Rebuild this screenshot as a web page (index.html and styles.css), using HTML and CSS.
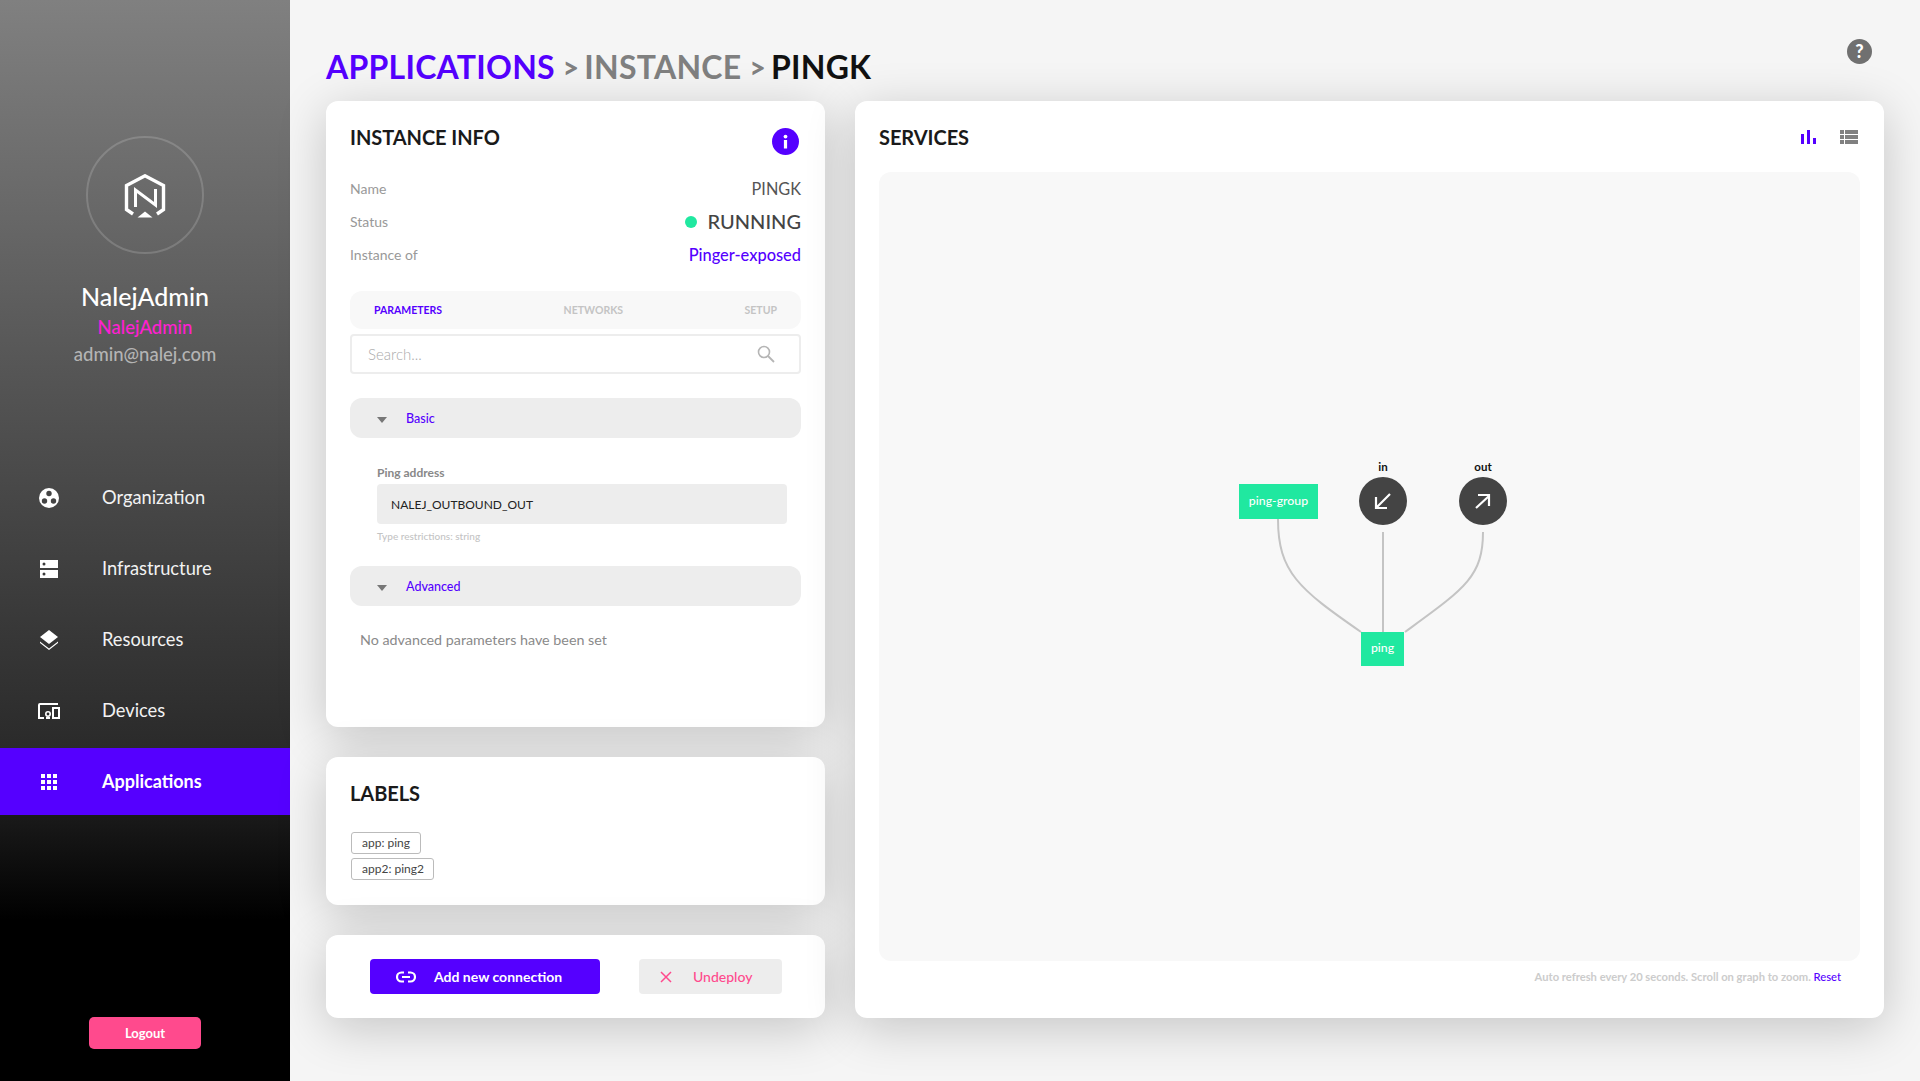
FILE: index.html
```html
<!DOCTYPE html>
<html lang="en">
<head>
<meta charset="utf-8">
<title>Nalej - Instance</title>
<link rel="stylesheet" href="styles.css">
</head>
<body>
<div class="app">
  <aside class="sidebar">
    <div class="profile">
      <div class="avatar">
        <svg class="logo" viewBox="0 0 42 44" width="42" height="44">
          <path d="M9 40 L2.500 35.500 V11.500 L21 1.800 L39.500 11.500 V35.500 L33 40" fill="none" stroke="#fff" stroke-width="3.400"/>
          <path d="M11.500 33 V16 L31.500 31 V15" fill="none" stroke="#fff" stroke-width="3"/>
          <path d="M13.500 43.500 L21 37.500 L28.500 43.500 Z" fill="#fff"/>
        </svg>
      </div>
      <div class="user-name">NalejAdmin</div>
      <div class="user-role">NalejAdmin</div>
      <div class="user-mail">admin@nalej.com</div>
    </div>
    <nav class="nav">
      <a class="nav-item">
        <span class="nav-icon"><svg viewBox="0 0 20 20" width="20" height="20"><circle cx="10" cy="10" r="10" fill="#fff"/><circle cx="10" cy="5.500" r="2.700" fill="#444"/><circle cx="5.500" cy="13" r="2.700" fill="#444"/><circle cx="14.500" cy="13" r="2.700" fill="#444"/></svg></span>
        <span>Organization</span>
      </a>
      <a class="nav-item">
        <span class="nav-icon"><svg viewBox="0 0 18 18" width="18" height="18"><path d="M0 0H18V8H0ZM0 10H18V18H0Z" fill="#fff"/><circle cx="4" cy="4" r="1.500" fill="#3b3b3b"/><circle cx="4" cy="14" r="1.500" fill="#3b3b3b"/></svg></span>
        <span>Infrastructure</span>
      </a>
      <a class="nav-item">
        <span class="nav-icon"><svg viewBox="0 0 18 20" width="18" height="20"><path d="M9 0 L18 7 L9 14 L0 7Z" fill="#fff"/><path d="M0 11.500 L9 18.500 L18 11.500 L18 13 L9 20 L0 13Z" fill="#fff"/></svg></span>
        <span>Resources</span>
      </a>
      <a class="nav-item">
        <span class="nav-icon"><svg viewBox="0 0 22 16" width="22" height="16"><path d="M20 1 H2 A1 1 0 0 0 1 2 V15 H6" fill="none" stroke="#fff" stroke-width="2"/><rect x="15" y="5" width="6" height="10" fill="none" stroke="#fff" stroke-width="2"/><circle cx="10" cy="11" r="2.200" fill="none" stroke="#fff" stroke-width="1.600"/><rect x="8" y="14" width="4" height="2" fill="#fff"/></svg></span>
        <span>Devices</span>
      </a>
      <a class="nav-item active">
        <span class="nav-icon"><svg viewBox="0 0 16 16" width="16" height="16" fill="#fff"><rect width="4" height="4"/><rect x="6" width="4" height="4"/><rect x="12" width="4" height="4"/><rect y="6" width="4" height="4"/><rect x="6" y="6" width="4" height="4"/><rect x="12" y="6" width="4" height="4"/><rect y="12" width="4" height="4"/><rect x="6" y="12" width="4" height="4"/><rect x="12" y="12" width="4" height="4"/></svg></span>
        <span>Applications</span>
      </a>
    </nav>
    <button class="logout">Logout</button>
  </aside>

  <main class="main">
    <header class="header">
      <h1 class="crumbs"><span class="crumb-app">APPLICATIONS</span><span class="crumb-sep">&gt;</span><span class="crumb-inst">INSTANCE</span><span class="crumb-sep">&gt;</span><span class="crumb-cur">PINGK</span></h1>
      <span class="help">?</span>
    </header>

    <div class="content">
      <div class="left">
        <section class="card card-info">
          <div class="card-head">
            <h2 class="card-title">INSTANCE INFO</h2>
            <span class="info-badge"><svg viewBox="0 0 27 27" width="27" height="27"><circle cx="13.500" cy="13.500" r="13.500" fill="#5500ff"/><circle cx="13.500" cy="8.600" r="1.900" fill="#fff"/><rect x="11.900" y="12" width="3.200" height="8.500" fill="#fff"/></svg></span>
          </div>
          <div class="info-row"><span class="info-key">Name</span><span class="info-name">PINGK</span></div>
          <div class="info-row"><span class="info-key">Status</span><span class="info-status"><i class="dot"></i><span class="status-text">RUNNING</span></span></div>
          <div class="info-row"><span class="info-key">Instance of</span><a class="info-link">Pinger-exposed</a></div>

          <div class="tabs">
            <span class="tab tab-on">PARAMETERS</span>
            <span class="tab">NETWORKS</span>
            <span class="tab">SETUP</span>
          </div>
          <div class="search">
            <span class="search-text">Search...</span>
            <svg viewBox="0 0 18 18" width="18" height="18"><circle cx="7" cy="7" r="5.500" fill="none" stroke="#b5b5b5" stroke-width="1.600"/><path d="M11 11 L17 17" stroke="#b5b5b5" stroke-width="1.800"/></svg>
          </div>

          <div class="group"><i class="caret"></i><span>Basic</span></div>
          <div class="field">
            <div class="field-label">Ping address</div>
            <div class="field-value">NALEJ_OUTBOUND_OUT</div>
            <div class="field-hint">Type restrictions: string</div>
          </div>
          <div class="group"><i class="caret"></i><span>Advanced</span></div>
          <p class="empty">No advanced parameters have been set</p>
        </section>

        <section class="card card-labels">
          <h2 class="card-title labels-title">LABELS</h2>
          <div class="tags">
            <span class="tag">app: ping</span>
            <span class="tag">app2: ping2</span>
          </div>
        </section>

        <section class="card card-actions">
          <button class="btn btn-primary">
            <svg viewBox="0 0 20 12" width="20" height="12"><path d="M8 1.500 H5.500 A4.500 4.500 0 0 0 5.500 10.500 H8 M12 1.500 H14.500 A4.500 4.500 0 0 1 14.500 10.500 H12 M6 6 H14" fill="none" stroke="#fff" stroke-width="2.200"/></svg>
            <span>Add new connection</span>
          </button>
          <button class="btn btn-danger">
            <svg viewBox="0 0 12 12" width="12" height="12"><path d="M1 1 L11 11 M11 1 L1 11" stroke="#ff4a8d" stroke-width="1.500"/></svg>
            <span>Undeploy</span>
          </button>
        </section>
      </div>

      <section class="card card-services">
        <div class="services-head">
          <h2 class="card-title">SERVICES</h2>
          <div class="view-icons">
            <svg viewBox="0 0 15 14" width="15" height="14" fill="#5500ff"><rect y="4" width="3" height="10"/><rect x="6" width="3" height="14"/><rect x="12" y="8" width="3" height="6"/></svg>
            <svg viewBox="0 0 18 14" width="18" height="14" fill="#808080"><rect width="4" height="4"/><rect x="5" width="13" height="4"/><rect y="5" width="4" height="4"/><rect x="5" y="5" width="13" height="4"/><rect y="10" width="4" height="4"/><rect x="5" y="10" width="13" height="4"/></svg>
          </div>
        </div>
        <div class="graph">
          <svg class="graph-svg" viewBox="0 0 980 789" width="980" height="789">
            <g fill="none" stroke="#c4c4c4" stroke-width="2">
              <path d="M399 347 C399 400 420 417 482 460"/>
              <path d="M504 360 V460"/>
              <path d="M604 360 C604 405 585 417 526 460"/>
            </g>
            <rect x="360" y="312" width="79" height="35" fill="#20e8a0"/>
            <text class="node-text" x="399.500" y="333">ping-group</text>
            <circle cx="504" cy="329" r="24" fill="#444"/>
            <path d="M511 322 L498 335 M497 325 V336 H508" fill="none" stroke="#fff" stroke-width="2.200"/>
            <text class="node-label" x="504" y="299">in</text>
            <circle cx="604" cy="329" r="24" fill="#444"/>
            <path d="M597 336 L610 324 M599 323 H610 V334" fill="none" stroke="#fff" stroke-width="2.200"/>
            <text class="node-label" x="604" y="299">out</text>
            <rect x="482" y="460" width="43" height="34" fill="#20e8a0"/>
            <text class="node-text" x="503.500" y="480">ping</text>
          </svg>
        </div>
        <div class="graph-foot">Auto refresh every 20 seconds. Scroll on graph to zoom. <a class="reset">Reset</a></div>
      </section>
    </div>
  </main>
</div>
</body>
</html>
```
FILE: styles.css
```css
* { box-sizing: border-box; }
html, body { margin: 0; height: 100%; }
body {
  font-family: Lato, "Open Sans", sans-serif;
  background: #f5f5f5;
  overflow: hidden;
}
.app { display: flex; height: 1081px; }

/* Sidebar */
.sidebar {
  width: 290px;
  flex: none;
  height: 100%;
  display: flex;
  flex-direction: column;
  align-items: stretch;
  background: linear-gradient(180deg, #808080 0, #2a2a2a 750px, #000 920px);
  color: #fff;
}
.profile { display: flex; flex-direction: column; align-items: center; padding-top: 136px; height: 460px; }
.avatar {
  width: 118px; height: 118px; border-radius: 50%;
  border: 2px solid rgba(255,255,255,.16);
  display: flex; align-items: center; justify-content: center;
}
.logo { display: block; margin-top: 1px; }
.user-name { margin-top: 27px; font-size: 25px; line-height: 30px; font-weight: 500; color: #fff; }
.user-role { margin-top: 3px; font-size: 18.500px; line-height: 26px; color: #ff1fd2; font-weight: 500; }
.user-mail { margin-top: 1px; font-size: 18.500px; line-height: 26px; color: #b4b4b4; font-weight: 500; }
.nav { display: flex; flex-direction: column; gap: 4px; margin-top: 4px; }
.nav-item {
  height: 67px;
  display: flex; align-items: center;
  font-size: 18.300px;
  color: #f2f2f2;
}
.nav-item span:last-child { margin-top: -2px; }
.nav-item.active { background: #5500ff; color: #fff; font-size: 18px; font-weight: 700; }
.nav-icon { width: 102px; padding-left: 49px; display: flex; flex: none; }
.nav-icon svg { display: block; transform: translateX(-50%); }
.logout {
  width: 112px; height: 32px;
  margin: 202px auto 0;
  border: 0; border-radius: 5px;
  background: #ff4a8d; color: #fff;
  font: 700 13px Lato, sans-serif;
}

/* Main */
.main { flex: 1; padding: 0 36px; min-width: 0; }
.header {
  height: 101px;
  display: flex; justify-content: space-between; align-items: flex-start;
  padding: 47px 12px 0 0;
}
.crumbs { margin: 0; font-size: 32px; line-height: 40px; font-weight: 700; letter-spacing: 0.250px; display: flex; }
.crumb-app { color: #5500ff; }
.crumb-inst { color: #808080; }
.crumb-cur { color: #111; }
.crumb-sep { color: #808080; font-size: 28px; font-weight: 900; margin: 0 5px 0 8px; }
.help {
  width: 25px; height: 25px; border-radius: 50%;
  background: #707070; color: #fff;
  margin-top: -8px;
  font-size: 18px; font-weight: 900; line-height: 25px; text-align: center;
}
.content { display: grid; grid-template-columns: 499px 1fr; gap: 30px; height: 917px; }
.left { display: flex; flex-direction: column; gap: 30px; }
.card {
  background: #fff;
  border-radius: 12px;
  box-shadow: 0 10px 50px rgba(0,0,0,.2);
}
.card-title { margin: 0; font-size: 20px; line-height: 25px; font-weight: 700; color: #1a1a1a; letter-spacing: -0.050px; }

/* Instance info */
.card-info { height: 626px; padding: 24px 24px 0; }
.card-head { display: flex; justify-content: space-between; height: 47px; }
.info-badge { margin: 3px 2.500px 0 0; height: 27px; }
.info-badge svg { display: block; }
.info-row { height: 33px; display: flex; justify-content: space-between; align-items: center; }
.info-key { font-size: 14px; color: #999; }
.info-name { font-size: 16.300px; color: #555; }
.info-status { font-size: 20px; font-weight: 500; color: #444; display: flex; align-items: center; gap: 11px; }
.status-text { margin-top: -2px; }
.dot { width: 12px; height: 12px; border-radius: 50%; background: #20e8a0; }
.info-link { font-size: 16.400px; font-weight: 500; color: #5500ff; margin-top: -1px; }

.tabs {
  height: 38px; margin-top: 20px;
  background: #f8f8f8; border-radius: 12px;
  padding: 0 24px;
  display: flex; justify-content: space-between; align-items: center;
}
.tab { font-size: 10.500px; font-weight: 700; color: #c4c4c4; }
.tab-on { color: #5500ff; }
.search {
  height: 40px; margin-top: 5px;
  border: 2px solid #ededed; border-radius: 4px;
  padding: 0 24px 0 16px;
  display: flex; justify-content: space-between; align-items: center;
}
.search-text { font-size: 15px; font-weight: 300; color: #aaa; }
.group {
  height: 40px; margin-top: 24px;
  background: #ededed; border-radius: 12px;
  padding-left: 27px;
  display: flex; align-items: center;
  font-size: 12.500px; font-weight: 500; color: #5500ff;
}
.caret {
  width: 0; height: 0; margin: 4px 19px 0 0;
  border-left: 5.500px solid transparent;
  border-right: 5.500px solid transparent;
  border-top: 6px solid #777;
}
.field { padding: 26px 14px 0 27px; }
.field-label { font-size: 12px; line-height: 18px; font-weight: 700; color: #888; }
.field-value {
  height: 40px; margin-top: 2px;
  background: #ededed; border-radius: 4px;
  padding-left: 14px;
  display: flex; align-items: center;
  font-size: 12px; color: #222;
}
.field-hint { margin-top: 5px; font-size: 10px; line-height: 14px; color: #c4c4c4; font-weight: 500; }
.field + .group { margin-top: 23px; }
.empty { margin: 25px 0 0 10px; font-size: 14.300px; line-height: 18px; font-weight: 400; color: #8a8a8a; }

/* Labels */
.card-labels { height: 148px; padding: 24px 24px 0; }
.labels-title { height: 51px; }
.tags { display: flex; flex-direction: column; align-items: flex-start; gap: 4px; padding-left: 1px; }
.tag {
  height: 22px; padding: 0 9.500px 0 10px;
  border: 1px solid #bbb; border-radius: 3px;
  font-size: 12px; line-height: 20px; color: #444;
}

/* Actions */
.card-actions { height: 83px; padding: 24px 0 0 44px; display: flex; gap: 39px; align-items: flex-start; }
.btn {
  height: 35px; border: 0; border-radius: 4px;
  display: flex; align-items: center;
  font: 700 14px Lato, sans-serif;
}
.btn-primary { width: 230px; padding-left: 26px; gap: 18px; background: #5500ff; color: #fff; }
.btn-danger { width: 143px; padding-left: 21px; gap: 21px; background: #ededed; color: #ff4a8d; font-weight: 500; }
.btn svg { display: block; }

/* Services */
.card-services { padding: 24px 24px 0; display: flex; flex-direction: column; }
.services-head { height: 47px; display: flex; justify-content: space-between; }
.view-icons { display: flex; gap: 24px; margin: 5px 2px 0 0; align-items: flex-start; }
.graph { height: 789px; background: #f8f8f8; border-radius: 12px; overflow: hidden; }
.graph-svg { display: block; }
.node-text { font-size: 12.300px; font-weight: 500; fill: #fff; text-anchor: middle; font-family: Lato, sans-serif; }
.node-label { font-size: 11.500px; font-weight: 700; fill: #111; text-anchor: middle; font-family: Lato, sans-serif; }
.graph-foot { margin-top: 9px; padding-right: 19px; text-align: right; font-size: 11.200px; line-height: 14px; font-weight: 700; color: #ccc; }
.reset { color: #5500ff; font-weight: 500; }
```
